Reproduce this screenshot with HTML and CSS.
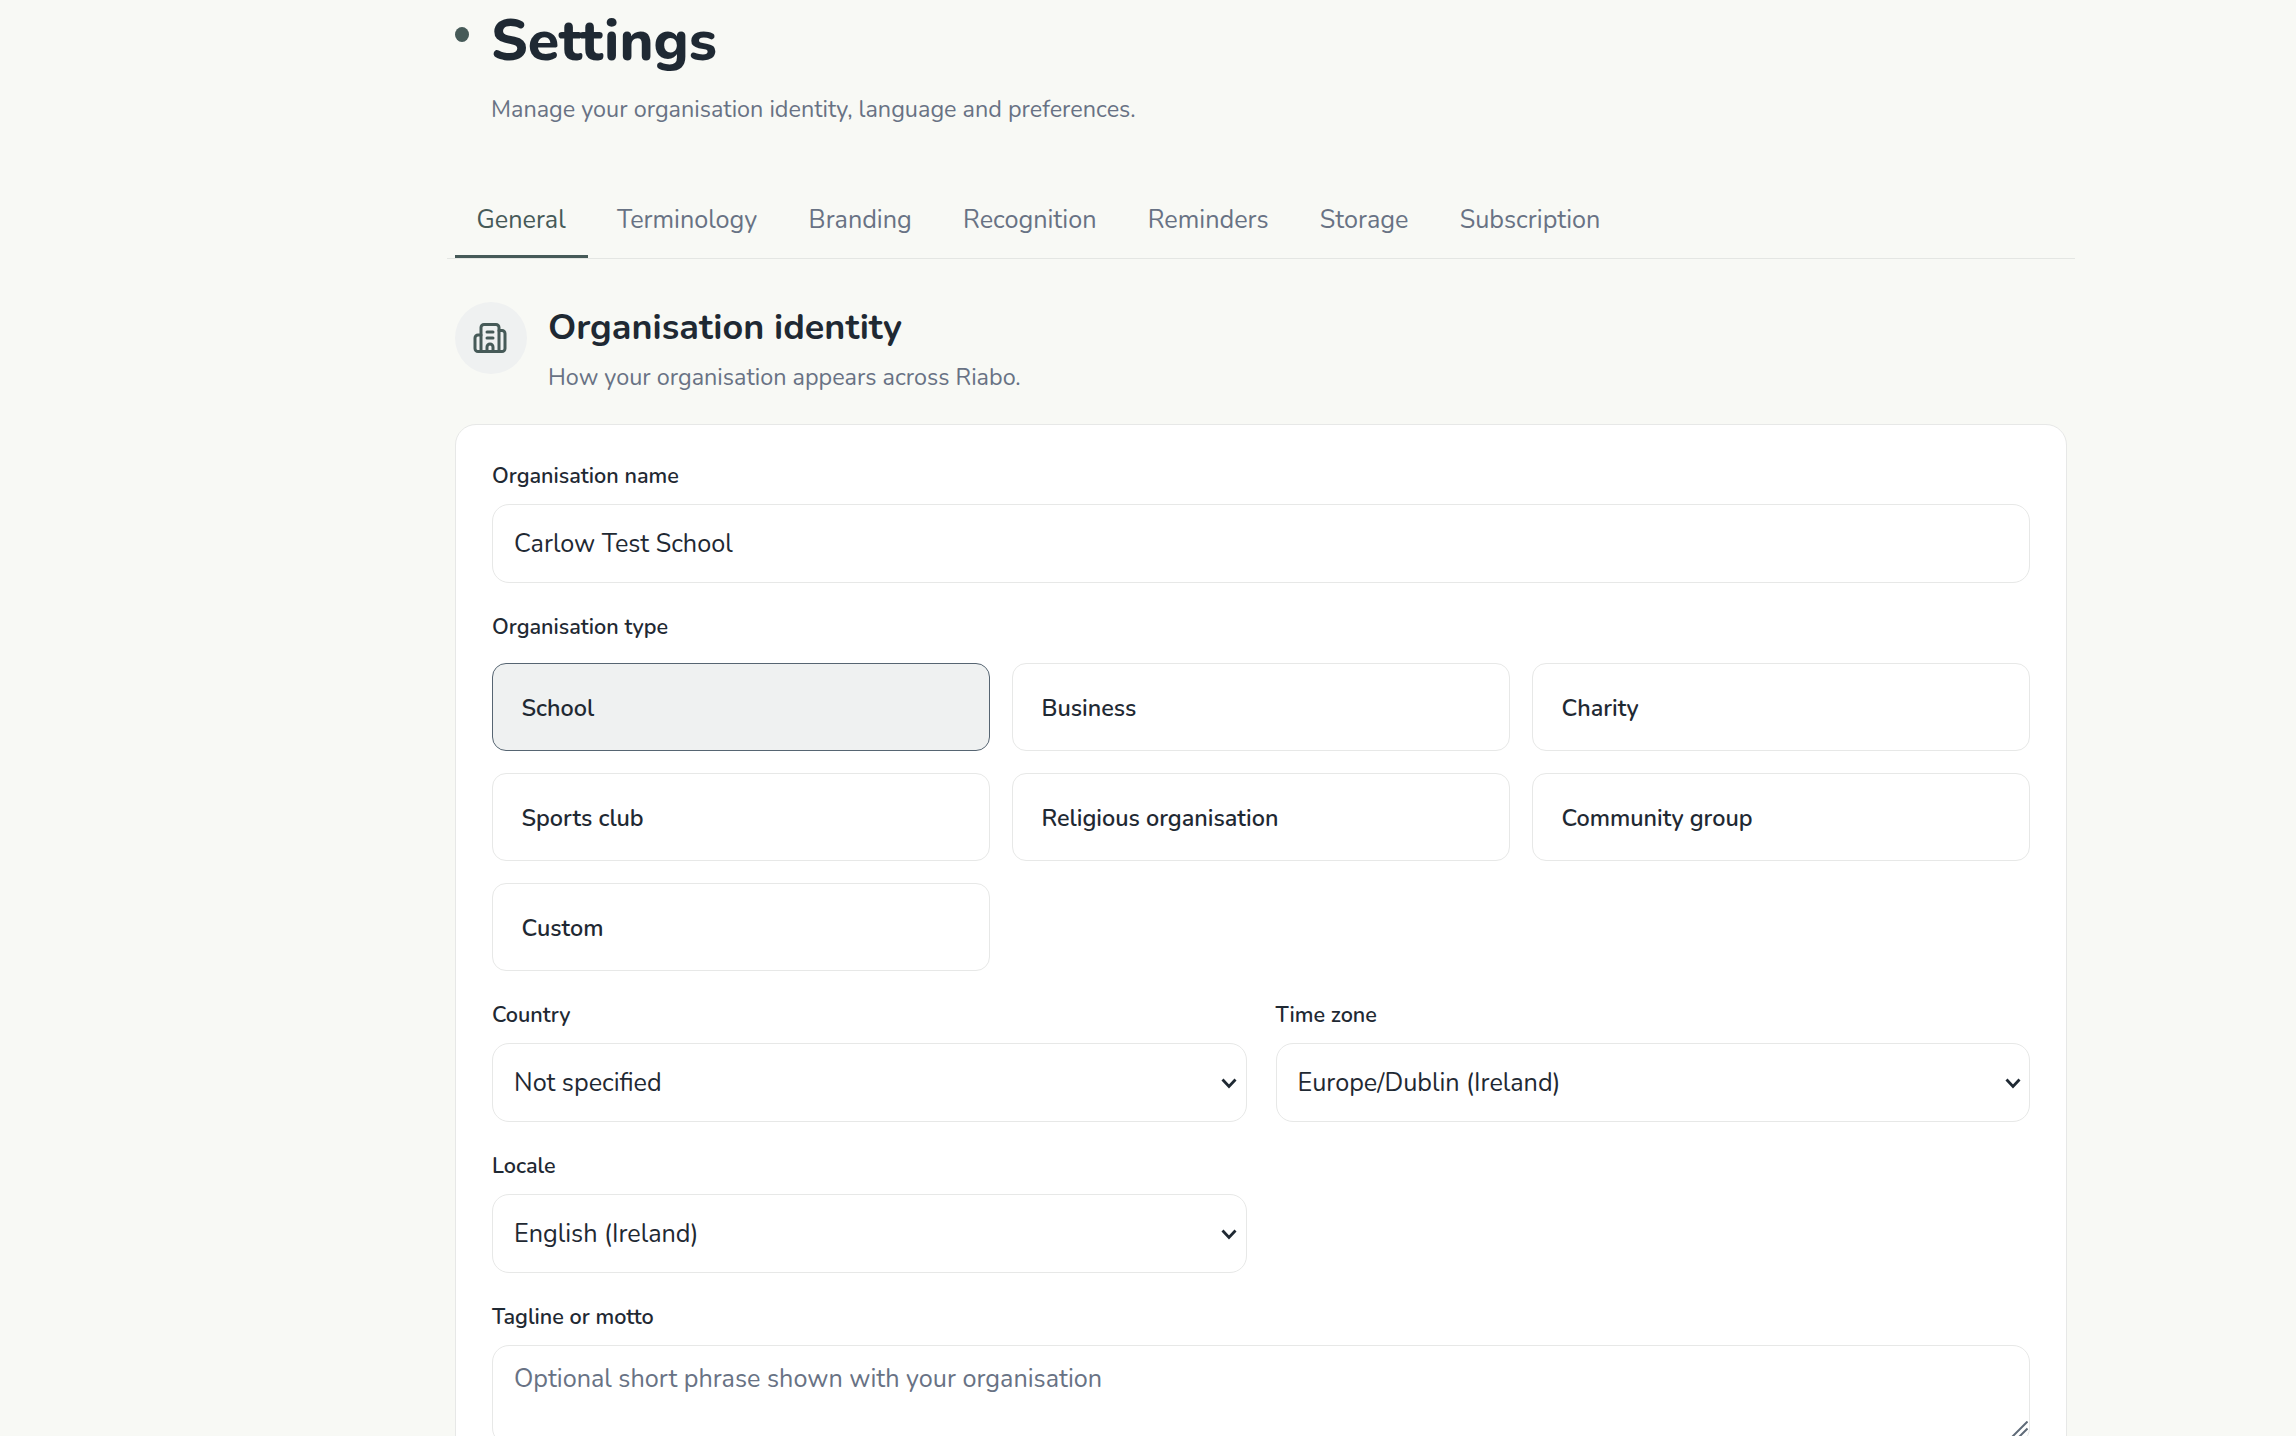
FILE: index.html
```html
<!DOCTYPE html>
<html lang="en">
<head>
    <meta charset="UTF-8">
    <meta name="viewport" content="width=device-width, initial-scale=1.0">
    <title>Settings</title>
    <link rel="stylesheet" href="styles.css">
</head>
<body>
    <main class="page">
        <header class="page-header">
            <span class="dot"></span>
            <div>
                <h1>Settings</h1>
                <p>Manage your organisation identity, language and preferences.</p>
            </div>
        </header>

        <nav class="tabs">
            <a class="tab active">General</a>
            <a class="tab">Terminology</a>
            <a class="tab">Branding</a>
            <a class="tab">Recognition</a>
            <a class="tab">Reminders</a>
            <a class="tab">Storage</a>
            <a class="tab">Subscription</a>
        </nav>

        <section>
            <div class="section-header">
                <span class="section-icon">
                    <svg viewBox="0 0 24 24" fill="none" stroke="currentColor" stroke-width="2" stroke-linecap="round" stroke-linejoin="round">
                        <path d="M10 12h4"/>
                        <path d="M10 8h4"/>
                        <path d="M14 21v-3a2 2 0 0 0-4 0v3"/>
                        <path d="M6 10H4a2 2 0 0 0-2 2v7a2 2 0 0 0 2 2h16a2 2 0 0 0 2-2V9a2 2 0 0 0-2-2h-2"/>
                        <path d="M6 21V5a2 2 0 0 1 2-2h8a2 2 0 0 1 2 2v16"/>
                    </svg>
                </span>
                <div>
                    <h2>Organisation identity</h2>
                    <p>How your organisation appears across Riabo.</p>
                </div>
            </div>

            <form class="card">
                <div class="field">
                    <label for="org-name">Organisation name</label>
                    <input type="text" id="org-name" class="control" value="Carlow Test School">
                </div>

                <div class="field">
                    <span class="label">Organisation type</span>
                    <div class="type-grid">
                        <button type="button" class="type selected">School</button>
                        <button type="button" class="type">Business</button>
                        <button type="button" class="type">Charity</button>
                        <button type="button" class="type">Sports club</button>
                        <button type="button" class="type">Religious organisation</button>
                        <button type="button" class="type">Community group</button>
                        <button type="button" class="type">Custom</button>
                    </div>
                </div>

                <div class="field-grid">
                    <div class="field">
                        <label for="country">Country</label>
                        <div class="select-wrap">
                            <select id="country" class="control"><option>Not specified</option></select>
                            <svg class="chevron" viewBox="0 0 16 11"><path d="M1.5 1.5 8 8.5l6.5-7"/></svg>
                        </div>
                    </div>
                    <div class="field">
                        <label for="timezone">Time zone</label>
                        <div class="select-wrap">
                            <select id="timezone" class="control"><option>Europe/Dublin (Ireland)</option></select>
                            <svg class="chevron" viewBox="0 0 16 11"><path d="M1.5 1.5 8 8.5l6.5-7"/></svg>
                        </div>
                    </div>
                    <div class="field">
                        <label for="locale">Locale</label>
                        <div class="select-wrap">
                            <select id="locale" class="control"><option>English (Ireland)</option></select>
                            <svg class="chevron" viewBox="0 0 16 11"><path d="M1.5 1.5 8 8.5l6.5-7"/></svg>
                        </div>
                    </div>
                </div>

                <div class="field">
                    <label for="tagline">Tagline or motto</label>
                    <div class="textarea-wrap">
                        <textarea id="tagline" class="control" placeholder="Optional short phrase shown with your organisation"></textarea>
                        <svg class="grip" viewBox="0 0 18 18"><path d="M.5 17.5l17-17M7.5 17.5l10-10"/></svg>
                    </div>
                </div>
            </form>
        </section>
    </main>
</body>
</html>
```
FILE: styles.css
```css
* {
    box-sizing: border-box;
}
body {
    margin: 0;
    height: 100vh;
    overflow: hidden;
    background-color: #f8f9f5;
    color: #1f2933;
    font-family: "Nunito", "Nunito Sans", Lato, sans-serif;
    font-size: 25.2px;
}
h1, h2, p {
    margin: 0;
}
p {
    color: #687284;
    font-size: 23.4px;
}
.page {
    width: 1612px;
    margin-left: 455px;
    padding-top: 9px;
}
.page-header {
    display: flex;
    gap: 22px;
}
.dot {
    width: 14px;
    height: 15px;
    margin-top: 18px;
    border-radius: 50%;
    background-color: #465a58;
}
h1 {
    font-size: 57.3px;
    font-weight: 800;
    line-height: 64px;
}
.page-header p {
    margin-top: 18px;
    line-height: 36px;
}
.tabs {
    display: flex;
    gap: 7.3px;
    margin: 53px -8px 0;
    padding: 0 8px;
    border-bottom: 1px solid #e4e6e3;
}
.tab {
    padding: 22px 22px 17px;
    line-height: 36px;
    color: #687284;
    border-bottom: 3px solid transparent;
}
.tab.active {
    padding-left: 21.5px;
    color: #465a58;
    border-bottom-color: #465a58;
}
.section-header {
    display: flex;
    gap: 21px;
    margin-top: 43px;
    height: 92px;
}
.section-icon {
    display: flex;
    align-items: center;
    justify-content: center;
    width: 72px;
    height: 72px;
    padding-right: 2px;
    border-radius: 50%;
    background-color: #eff1f1;
    color: #465a58;
}
.section-icon svg {
    width: 36px;
    height: 36px;
}
h2 {
    margin-top: 3px;
    font-size: 36px;
    font-weight: 700;
    line-height: 46px;
}
.section-header p {
    margin-top: 9px;
    line-height: 34px;
}
.card {
    display: flex;
    flex-direction: column;
    gap: 29px;
    margin-top: 30px;
    padding: 36px;
    border: 1px solid #e7e8e7;
    border-radius: 21px;
    background-color: #ffffff;
}
.field {
    display: flex;
    flex-direction: column;
    gap: 13px;
}
label, .label {
    font-size: 21.6px;
    font-weight: 600;
    line-height: 30px;
}
.control {
    display: block;
    width: 100%;
    height: 79px;
    margin: 0;
    padding: 0 21px;
    border: 1px solid #e7e8e7;
    border-radius: 17px;
    background-color: #ffffff;
    color: #1f2933;
    font: inherit;
    appearance: none;
    outline: none;
}
.type-grid {
    display: grid;
    grid-template-columns: repeat(3, 1fr);
    gap: 22px;
    margin-top: 8px;
}
.type {
    height: 88px;
    padding: 2px 28.5px 0;
    border: 1px solid #e7e8e7;
    border-radius: 14px;
    background-color: #ffffff;
    color: #1f2933;
    font: inherit;
    font-size: 23.4px;
    font-weight: 600;
    text-align: left;
}
.type.selected {
    border-color: #566572;
    background-color: #eff1f1;
}
.field-grid {
    display: grid;
    grid-template-columns: 1fr 1fr;
    gap: 29px;
}
.select-wrap, .textarea-wrap {
    position: relative;
}
.chevron {
    position: absolute;
    right: 9.5px;
    top: 35px;
    width: 16px;
    height: 11px;
    fill: none;
    stroke: #1f2933;
    stroke-width: 2.8;
}
textarea.control {
    height: 100px;
    padding-top: 15px;
    line-height: 36px;
    resize: none;
}
textarea::placeholder {
    color: #687284;
    opacity: 1;
}
.grip {
    position: absolute;
    right: 2px;
    top: 76px;
    width: 18px;
    height: 18px;
    fill: none;
    stroke: #5f6b78;
    stroke-width: 2;
}
```
